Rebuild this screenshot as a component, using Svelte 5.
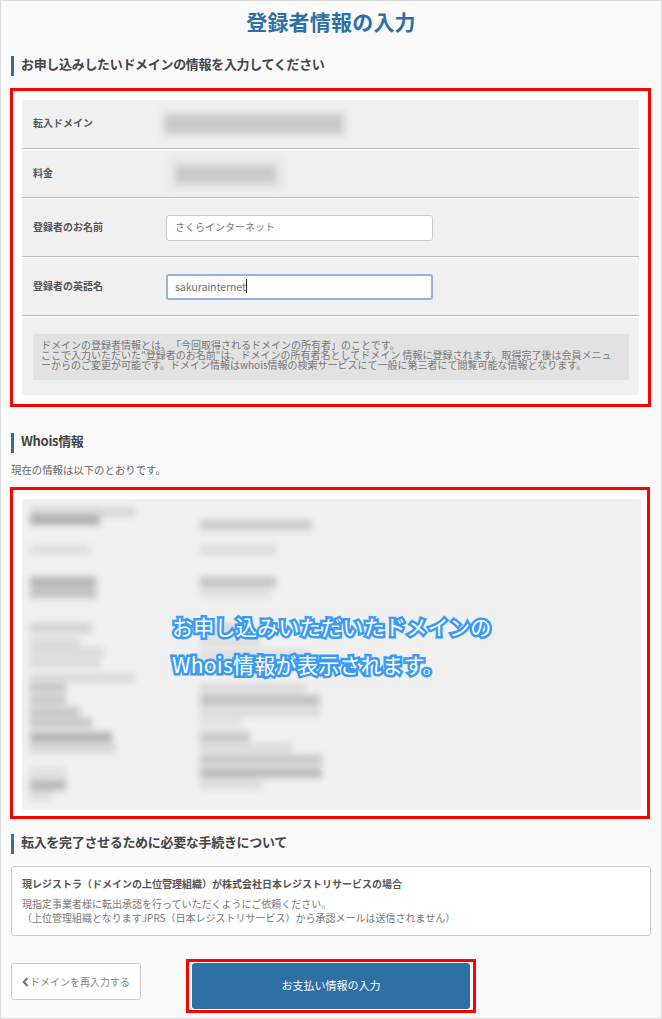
<script>
  const leftRows = [
    { top: 8, w: 105, o: 0.3 },
    { top: -2, w: 70, o: 0.8 },
    { top: 20, w: 60, o: 0.2 },
    { top: 22, w: 66, o: 0.75 },
    { top: 1, w: 66, o: 0.6 },
    { top: 25, w: 62, o: 0.35 },
    { top: 4, w: 50, o: 0.25 },
    { top: 0, w: 74, o: 0.25 },
    { top: 1, w: 70, o: 0.25 },
    { top: 5, w: 105, o: 0.25 },
    { top: 0, w: 36, o: 0.5 },
    { top: 2, w: 36, o: 0.5 },
    { top: 2, w: 50, o: 0.5 },
    { top: 1, w: 62, o: 0.5 },
    { top: 4, w: 82, o: 0.75 },
    { top: 1, w: 86, o: 0.3 },
    { top: 15, w: 36, o: 0.22 },
    { top: 2, w: 36, o: 0.7 },
    { top: 0, w: 24, o: 0.22 }
  ];

  const rightRows = [
    { top: 21, w: 112, o: 0.45 },
    { top: 15, w: 76, o: 0.22 },
    { top: 22, w: 76, o: 0.55 },
    { top: 1, w: 70, o: 0.18 },
    { top: 25, w: 50, o: 0.3 },
    { top: 4, w: 60, o: 0.22 },
    { top: 3, w: 110, o: 0.22 },
    { top: 23, w: 106, o: 0.25 },
    { top: 2, w: 120, o: 0.6 },
    { top: 2, w: 120, o: 0.25 },
    { top: 1, w: 42, o: 0.18 },
    { top: 4, w: 50, o: 0.5 },
    { top: 1, w: 92, o: 0.25 },
    { top: 2, w: 122, o: 0.5 },
    { top: 3, w: 122, o: 0.65 },
    { top: 2, w: 62, o: 0.22 }
  ];
</script>

<div class="page">
  <h1>登録者情報の入力</h1>

  <h2>お申し込みしたいドメインの情報を入力してください</h2>
  <section class="marked form-box">
    <div class="panel">
      <div class="row first">
        <div class="label">転入ドメイン</div>
        <div class="blurred domain"></div>
      </div>
      <div class="row second">
        <div class="label">料金</div>
        <div class="blurred price"></div>
      </div>
      <div class="row field-row">
        <div class="label">登録者のお名前</div>
        <div class="field">さくらインターネット</div>
      </div>
      <div class="row field-row">
        <div class="label">登録者の英語名</div>
        <div class="field focused"><span class="latin">sakurainternet</span><i class="caret"></i></div>
      </div>
      <div class="note-row">
        <p class="note">
          ドメインの登録者情報とは、「今回取得されるドメインの所有者」のことです。<br />
          ここで入力いただいた"登録者のお名前"は、ドメインの所有者名としてドメイン 情報に登録されます。取得完了後は会員メニュ<br />
          ーからのご変更が可能です。ドメイン情報はwhois情報の検索サービスにて一般に第三者にて閲覧可能な情報となります。
        </p>
      </div>
    </div>
  </section>

  <h2 class="whois-heading">Whois情報</h2>
  <p class="lead">現在の情報は以下のとおりです。</p>
  <section class="marked whois-box">
    <div class="whois">
      <div class="col left">
        {#each leftRows as r}
          <div class="line" style="margin-top:{r.top}px;width:{r.w}px;opacity:{r.o}"></div>
        {/each}
      </div>
      <div class="col">
        {#each rightRows as r}
          <div class="line" style="margin-top:{r.top}px;width:{r.w}px;opacity:{r.o}"></div>
        {/each}
      </div>
      <p class="caption">お申し込みいただいたドメインの<br />Whois情報が表示されます。</p>
    </div>
  </section>

  <h2 class="steps-heading">転入を完了させるために必要な手続きについて</h2>
  <div class="steps">
    <p class="steps-title">現レジストラ（ドメインの上位管理組織）が株式会社日本レジストリサービスの場合</p>
    <p class="steps-body">
      現指定事業者様に転出承認を行っていただくようにご依頼ください。<br />
      （上位管理組織となりますJPRS（日本レジストリサービス）から承認メールは送信されません）
    </p>
  </div>

  <div class="actions">
    <button class="back" type="button">
      <svg width="7" height="10" viewBox="0 0 7 10" aria-hidden="true">
        <path d="M5.5 1 L1.8 5 L5.5 9" fill="none" stroke="#777" stroke-width="2.2" />
      </svg>
      ドメインを再入力する
    </button>
    <div class="next-mark">
      <button class="next" type="button">お支払い情報の入力</button>
    </div>
  </div>
</div>

<style>
  :global(body) {
    margin: 0;
  }

  .page {
    box-sizing: border-box;
    width: 662px;
    height: 1019px;
    padding: 0 10px;
    overflow: hidden;
    background: #fafafa;
    border: 1px solid #dcdcdc;
    font-family: "Noto Sans CJK JP", "Liberation Sans", sans-serif;
    font-size: 10px;
    color: #777;
    text-spacing-trim: space-all;
  }

  p {
    margin: 0;
  }

  h1 {
    margin: 0;
    height: 44px;
    line-height: 41px;
    font-size: 21px;
    font-weight: 700;
    letter-spacing: 0.2px;
    text-align: center;
    color: #2c70a5;
  }

  h2 {
    margin: 11px 0 0 0;
    height: 20px;
    line-height: 15px;
    padding-left: 7px;
    border-left: 3px solid #2c70a5;
    font-size: 13px;
    font-weight: 700;
    letter-spacing: -0.32px;
    color: #444;
  }

  .marked {
    box-sizing: border-box;
    margin-left: -1px;
    width: 641px;
    padding: 9px;
    border: 3px solid #f00;
    background: #fff;
  }

  .form-box {
    margin-top: 12px;
    height: 319px;
  }

  .panel {
    height: 295px;
    background: #f0f0f0;
    border-radius: 3px;
  }

  .row {
    display: flex;
    align-items: center;
    padding-left: 11px;
    border-bottom: 1px solid #bbb;
    box-shadow: 0 1px 0 #fff;
    margin-bottom: 1px;
  }

  .first {
    height: 48px;
  }

  .second {
    height: 47px;
  }

  .field-row {
    height: 57px;
  }

  .label {
    flex: none;
    width: 133px;
    margin-top: -3px;
    font-weight: 700;
    color: #555;
  }

  .blurred {
    filter: blur(3px);
    background: repeating-linear-gradient(90deg, #c6c6c6 0 7px, #d0d0d0 7px 10px);
    box-shadow: 0 0 0 5px rgba(205, 205, 205, 0.22);
  }

  .domain {
    width: 178px;
    height: 18px;
    margin: -1px 0 0 -1px;
  }

  .price {
    width: 100px;
    height: 17px;
    margin: 2px 0 0 10px;
    box-shadow: 0 0 0 8px rgba(205, 205, 205, 0.25);
  }

  .field {
    box-sizing: border-box;
    display: flex;
    align-items: center;
    width: 267px;
    height: 26px;
    padding: 0 0 2px 8px;
    background: #fff;
    border: 1px solid #ccc;
    border-radius: 3px;
    color: #777;
  }

  .focused {
    border: 2px solid #8fb4ea;
    padding-left: 7px;
  }

  .latin {
    font-size: 11px;
    letter-spacing: -0.3px;
  }

  .caret {
    width: 1px;
    height: 14px;
    background: #222;
  }

  .note-row {
    padding: 17px 10px 0 11px;
  }

  .note {
    box-sizing: border-box;
    height: 46px;
    padding: 6px 8px 0;
    background: #e2e2e2;
    line-height: 10px;
    white-space: nowrap;
  }

  .whois-heading {
    margin-top: 26px;
  }

  .lead {
    margin-top: 10px;
    height: 14px;
    line-height: 14px;
    font-size: 10.4px;
    color: #666;
  }

  .whois-box {
    margin-top: 10px;
    height: 332px;
    width: 640px;
  }

  .whois {
    position: relative;
    display: flex;
    height: 311px;
    width: 619px;
    overflow: hidden;
    background: #f0f0f0;
    border-radius: 3px;
  }

  .col {
    display: flex;
    flex-direction: column;
    align-items: flex-start;
    filter: blur(3px);
  }

  .left {
    width: 178px;
    padding-left: 8px;
    box-sizing: border-box;
  }

  .line {
    flex: none;
    height: 10px;
    background: #a0a0a0;
  }

  .caption {
    position: absolute;
    left: 150px;
    top: 108px;
    font-size: 21px;
    line-height: 38px;
    letter-spacing: 0.3px;
    white-space: nowrap;
    color: #fff;
    -webkit-text-stroke: 5px #3a9bf6;
    paint-order: stroke fill;
  }

  .steps-heading {
    margin-top: 15px;
  }

  .steps {
    box-sizing: border-box;
    margin: 12px 0 0 0;
    width: 640px;
    height: 70px;
    padding: 10px 10px 0;
    background: #fff;
    border: 1px solid #ccc;
    border-radius: 3px;
  }

  .steps-title {
    height: 14px;
    line-height: 14px;
    font-weight: 700;
    color: #555;
  }

  .steps-body {
    margin-top: 6px;
    line-height: 14px;
  }

  .actions {
    display: flex;
    align-items: flex-start;
    margin-top: 23px;
  }

  button {
    font: inherit;
    cursor: pointer;
  }

  .back {
    display: flex;
    align-items: center;
    justify-content: center;
    gap: 1px;
    box-sizing: border-box;
    width: 130px;
    height: 37px;
    margin-top: 4px;
    padding: 0;
    background: #fff;
    border: 1px solid #ccc;
    border-radius: 3px;
    color: #888;
  }

  .next-mark {
    box-sizing: border-box;
    width: 290px;
    height: 54px;
    margin-left: 45px;
    padding: 1px 3px;
    border: 3px solid #f00;
    background: #fff;
  }

  .next {
    display: block;
    width: 100%;
    height: 46px;
    padding: 0 0 2px;
    background: #2c70a5;
    border: 0;
    border-radius: 3px;
    font-size: 11px;
    color: #fff;
  }
</style>
